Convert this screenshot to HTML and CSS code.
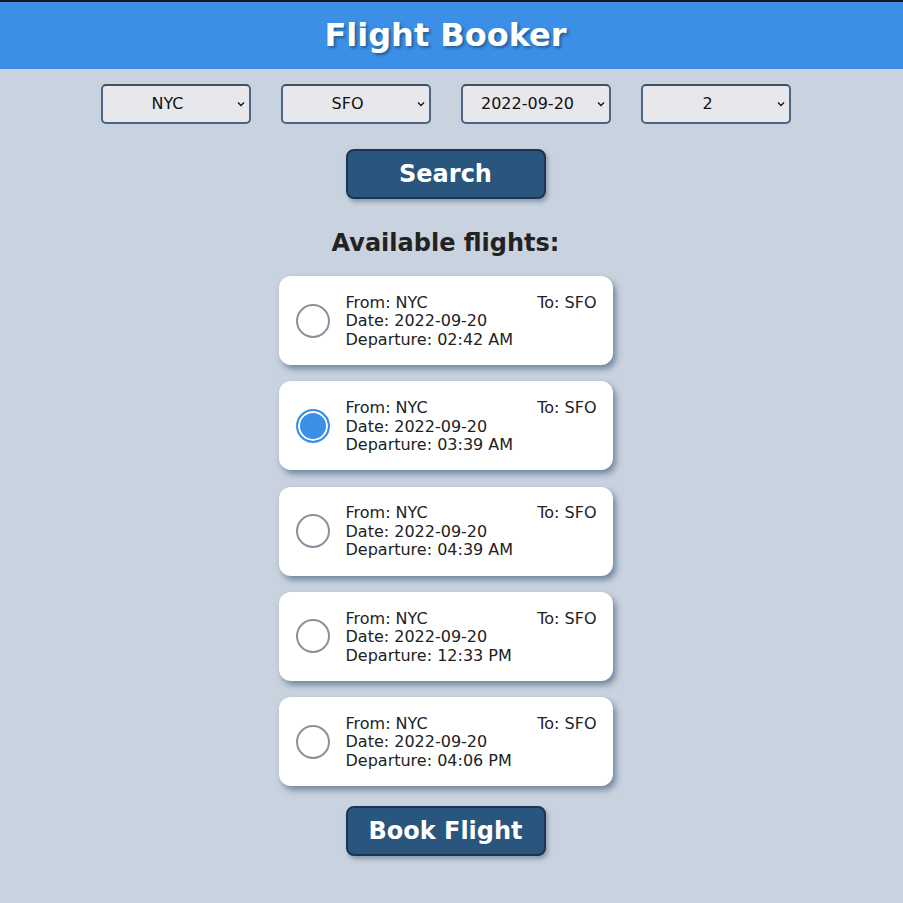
FILE: index.html
```html
<!DOCTYPE html>
<html lang="en">
<head>
<meta charset="utf-8">
<title>Flight Booker</title>
<link rel="stylesheet" href="styles.css">
</head>
<body>
<header class="topbar"><h1 class="title">Flight Booker</h1></header>
<main class="main">
  <div class="filters">
    <select class="sel"><option>NYC</option></select>
    <select class="sel"><option>SFO</option></select>
    <select class="sel"><option>2022-09-20</option></select>
    <select class="sel"><option>2</option></select>
  </div>
  <button class="btn">Search</button>
  <h2 class="heading">Available flights:</h2>
  <div class="list">
    <label class="card"><input class="radio" type="radio" name="f"><div class="info"><div class="row"><span>From: NYC</span><span>To: SFO</span></div><div>Date: 2022-09-20</div><div>Departure: 02:42 AM</div></div></label>
    <label class="card"><input class="radio" type="radio" name="f" checked><div class="info"><div class="row"><span>From: NYC</span><span>To: SFO</span></div><div>Date: 2022-09-20</div><div>Departure: 03:39 AM</div></div></label>
    <label class="card"><input class="radio" type="radio" name="f"><div class="info"><div class="row"><span>From: NYC</span><span>To: SFO</span></div><div>Date: 2022-09-20</div><div>Departure: 04:39 AM</div></div></label>
    <label class="card"><input class="radio" type="radio" name="f"><div class="info"><div class="row"><span>From: NYC</span><span>To: SFO</span></div><div>Date: 2022-09-20</div><div>Departure: 12:33 PM</div></div></label>
    <label class="card"><input class="radio" type="radio" name="f"><div class="info"><div class="row"><span>From: NYC</span><span>To: SFO</span></div><div>Date: 2022-09-20</div><div>Departure: 04:06 PM</div></div></label>
  </div>
  <button class="btn book">Book Flight</button>
</main>
</body>
</html>
```

FILE: styles.css
```css
html, body {
  margin: 0;
  padding: 0;
  background: #c9d3df;
  font-family: "DejaVu Sans", sans-serif;
  color: #222;
}
body {
  border-top: 2px solid #161a20;
  min-height: 901px;
  box-sizing: border-box;
}
.topbar {
  background: #3b8fe6;
  height: 67px;
  box-sizing: border-box;
  display: flex;
  align-items: center;
  justify-content: center;
  padding: 0 12px 2px 0;
}
.title {
  margin: 0;
  font-size: 32px;
  font-weight: bold;
  color: #fff;
  text-shadow: 2px 2px 3px rgba(0, 0, 0, 0.35);
}
.main {
  display: flex;
  flex-direction: column;
  align-items: center;
  padding-right: 12px;
}
.filters {
  display: flex;
  gap: 30px;
  margin-top: 15px;
}
.sel {
  appearance: none;
  -webkit-appearance: none;
  width: 150px;
  height: 40px;
  border: 2px solid #4d6480;
  border-top-color: #3f5166;
  border-radius: 5px;
  background-color: #e8e8ec;
  background-image: url("data:image/svg+xml,%3Csvg xmlns='http://www.w3.org/2000/svg' width='8' height='6' viewBox='0 0 8 6'%3E%3Cpath d='M1 1.5 L4 4.5 L7 1.5' fill='none' stroke='%23111' stroke-width='1.3'/%3E%3C/svg%3E");
  background-repeat: no-repeat;
  background-position: right 4px center;
  padding: 0 22px 2px 6px;
  font-family: "DejaVu Sans", sans-serif;
  font-size: 16px;
  color: #111;
  text-align: center;
  text-align-last: center;
}
.btn {
  margin-top: 25px;
  width: 200px;
  height: 50px;
  background: #2a557d;
  border: 2px solid #1b3551;
  border-radius: 8px;
  color: #fff;
  font-family: "DejaVu Sans", sans-serif;
  font-size: 24px;
  font-weight: bold;
  box-shadow: 2px 3px 4px rgba(30, 50, 80, 0.35);
}
.heading {
  margin: 30px 0 0;
  font-size: 24px;
  line-height: 28px;
  font-weight: bold;
  color: #222;
}
.list {
  margin-top: 19px;
  display: flex;
  flex-direction: column;
  gap: 16.25px;
}
.card {
  width: 334px;
  height: 89px;
  box-sizing: border-box;
  background: #fff;
  border-radius: 12px;
  box-shadow: 3px 4px 6px rgba(40, 70, 110, 0.55);
  display: flex;
  align-items: center;
  padding: 0 16px 0 17px;
  gap: 16px;
  font-size: 16px;
}
.radio {
  appearance: none;
  -webkit-appearance: none;
  margin: 0;
  width: 34px;
  height: 34px;
  flex: none;
  border: 2px solid #8f8f9d;
  border-radius: 50%;
  background: #fff;
}
.radio:checked {
  border-color: #3b8fe6;
  background: #3b8fe6;
  box-shadow: inset 0 0 0 2px #fff;
}
.info {
  flex: 1;
  line-height: 18.5px;
  padding-top: 2px;
  color: #222;
}
.row {
  display: flex;
  justify-content: space-between;
}
.book {
  margin-top: 20px;
}
```
